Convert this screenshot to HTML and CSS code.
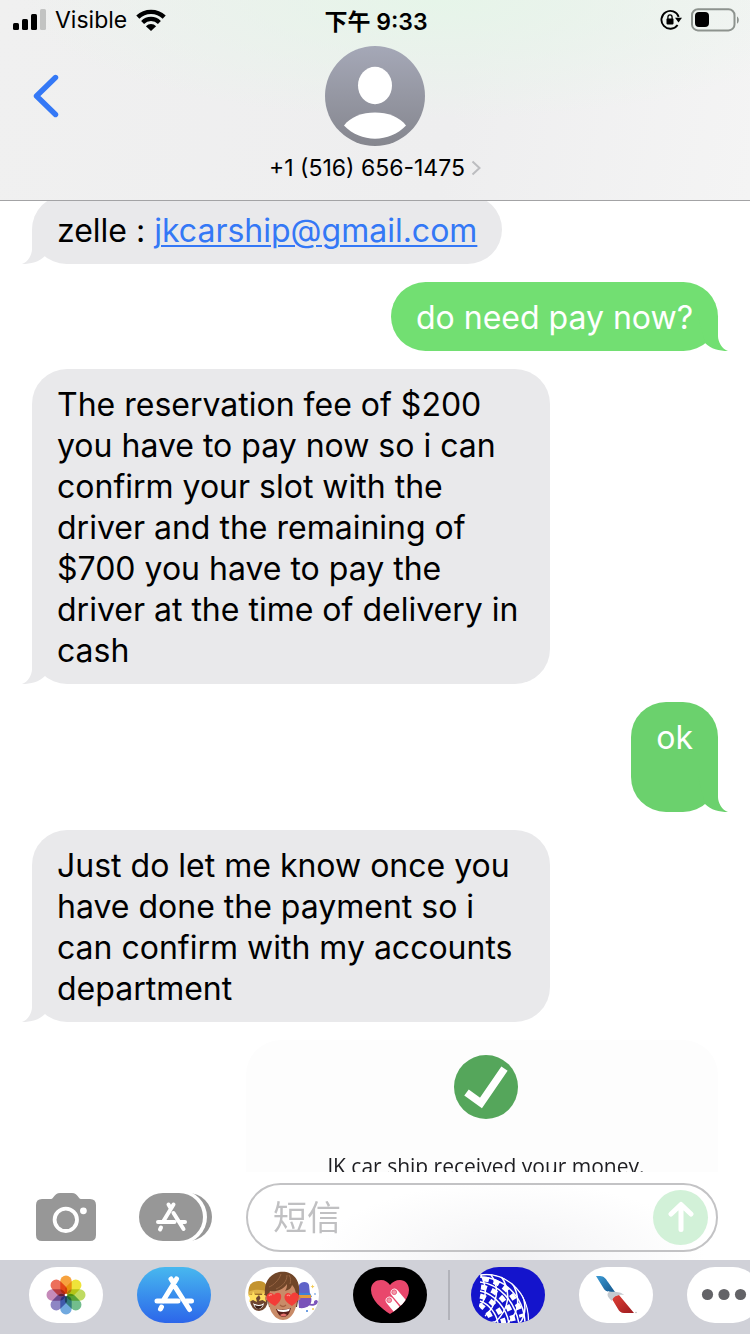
FILE: index.html
```html
<!DOCTYPE html>
<html lang="zh-CN">
<head>
    <meta charset="UTF-8">
    <meta name="viewport" content="width=device-width, initial-scale=1.0">
    <title>+1 (516) 656-1475</title>
    <link rel="stylesheet" href="styles.css">
</head>
<body>
    <header class="header">
        <div class="status-bar">
            <div class="status-left">
                <svg class="signal" width="33" height="22" viewBox="0 0 33 22">
                    <rect x="0" y="14" width="6" height="7" rx="1.5"/>
                    <rect x="9" y="10" width="6" height="11" rx="1.5"/>
                    <rect x="18" y="5" width="6" height="16" rx="1.5"/>
                    <rect x="27" y="0" width="6" height="21" rx="1.5" fill="#c2c3c2"/>
                </svg>
                <span>Visible</span>
                <svg class="wifi" width="30" height="22" viewBox="0 0 30 22">
                    <path d="M1.8 8.2A19 19 0 0 1 28.2 8.2" fill="none" stroke="#000" stroke-width="4.4"/>
                    <path d="M6.6 13.4A12 12 0 0 1 23.4 13.4" fill="none" stroke="#000" stroke-width="4.2"/>
                    <path d="M9.9 17.2A7.2 7.2 0 0 1 20.1 17.2L15 22Z"/>
                </svg>
            </div>
            <time class="clock">下午 9:33</time>
            <div class="status-right">
                <svg width="22" height="22" viewBox="0 0 22 22">
                    <path d="M17.600 16A8.900 8.900 0 1 1 18.700 7.800" fill="none" stroke="#000" stroke-width="1.9"/>
                    <path d="M15 8.800H22L18.500 13.400Z"/>
                    <rect x="6.500" y="9.600" width="7" height="5.800" rx="0.8"/>
                    <path d="M7.900 10V8.200a2.100 2.300 0 0 1 4.200 0V10" fill="none" stroke="#000" stroke-width="1.3"/>
                </svg>
                <svg width="48" height="24" viewBox="0 0 48 24">
                    <rect x="1" y="1.2" width="42.500" height="21.200" rx="6" fill="none" stroke="#8d938e" stroke-width="2"/>
                    <rect x="4" y="4" width="14" height="15" rx="4"/>
                    <path d="M46 8.500c2.400 1.200 2.400 6 0 7.200z" fill="#8d938e"/>
                </svg>
            </div>
        </div>
        <div class="nav">
            <button class="back" type="button" aria-label="返回">
                <svg width="28" height="44" viewBox="0 0 28 44">
                    <path d="M23.500 3.500L4.500 22L23.500 40.500" fill="none" stroke="#3478f6" stroke-width="5.400" stroke-linecap="round" stroke-linejoin="round"/>
                </svg>
            </button>
            <button class="contact" type="button">
                <svg class="avatar" width="100" height="100" viewBox="0 0 100 100">
                    <defs>
                        <linearGradient id="avatar-bg" x1="0" y1="0" x2="0" y2="1">
                            <stop offset="0" stop-color="#a5a8b7"/>
                            <stop offset="1" stop-color="#85868e"/>
                        </linearGradient>
                    </defs>
                    <circle cx="50" cy="50" r="50" fill="url(#avatar-bg)"/>
                    <ellipse cx="50" cy="39.500" rx="17" ry="18.700" fill="#fff"/>
                    <path d="M19 79.500C31 62 69 62 81 79.500C65 97 35 97 19 79.500Z" fill="#fff"/>
                </svg>
                <span class="contact-name">+1 (516) 656-1475
                    <svg width="10" height="16" viewBox="0 0 10 16">
                        <path d="M1.500 1.500L8.500 8L1.500 14.500" fill="none" stroke="#bcbdc0" stroke-width="2"/>
                    </svg>
                </span>
            </button>
        </div>
    </header>

    <main class="thread">
        <div class="bubble received">zelle : <a href="mailto:jkcarship@gmail.com">jkcarship@gmail.com</a></div>
        <div class="bubble sent">do need pay now?</div>
        <div class="bubble received">The reservation fee of $200 you have to pay now so i can confirm your slot with the driver and the remaining of $700 you have to pay the driver at the time of delivery in cash</div>
        <div class="bubble sent darker">ok<br><br></div>
        <div class="bubble received">Just do let me know once you have done the payment so i can confirm with my accounts department</div>
        <div class="receipt">
            <svg width="64" height="64" viewBox="0 0 64 64">
                <circle cx="32" cy="32" r="32" fill="#55a65b"/>
                <path d="M12.500 37.500L27 48L50.500 13.700" fill="none" stroke="#fff" stroke-width="7.600"/>
            </svg>
            <p>JK car ship received your money.</p>
        </div>
    </main>

    <form class="composer">
        <button type="button" aria-label="相机">
            <svg width="60" height="48" viewBox="0 0 60 48">
                <path d="M6 6H15C18 6 18 0 24 0H36C42 0 42 6 45 6H54Q60 6 60 12V42Q60 48 54 48H6Q0 48 0 42V12Q0 6 6 6Z" fill="#979797"/>
                <circle cx="29.800" cy="26.800" r="11.200" fill="none" stroke="#fff" stroke-width="3.800"/>
                <circle cx="47.400" cy="17.800" r="3.400" fill="#fff"/>
            </svg>
        </button>
        <button type="button" aria-label="App Store">
            <svg width="73" height="48" viewBox="0 0 73 48">
                <rect x="8" y="0" width="65" height="48" rx="24" fill="#979797"/>
                <rect x="3" y="-3" width="65" height="54" rx="27" fill="#fff"/>
                <rect x="0" y="0" width="64" height="48" rx="24" fill="#979797"/>
                <g fill="none" stroke="#fff" stroke-width="4" stroke-linecap="round">
                    <path d="M34.500 11.500L24.500 28M29.500 11.500L31.500 15M34.500 20L44.500 36M19 29H35.500M41.500 29H46M22 34.500L21 36.500"/>
                </g>
            </svg>
        </button>
        <div class="message-box">
            <input type="text" placeholder="短信" aria-label="短信">
            <button class="send" type="submit" aria-label="发送">
                <svg width="26" height="32" viewBox="0 0 26 32">
                    <path d="M13 28.500V4M3 13L13 3.500L23 13" fill="none" stroke="#fff" stroke-width="5" stroke-linecap="round" stroke-linejoin="round"/>
                </svg>
            </button>
        </div>
    </form>

    <nav class="app-strip">
        <div class="apps">
            <button class="app" type="button" aria-label="照片">
                <svg width="74" height="56" viewBox="0 0 74 56">
                    <g class="petals" transform="translate(37 28)">
                        <rect x="-5.700" y="-19.500" width="11.400" height="19" rx="5.700" fill="#f7a23e"/>
                        <rect x="-5.700" y="-19.500" width="11.400" height="19" rx="5.700" fill="#efe43a" transform="rotate(45)"/>
                        <rect x="-5.700" y="-19.500" width="11.400" height="19" rx="5.700" fill="#bfdb62" transform="rotate(90)"/>
                        <rect x="-5.700" y="-19.500" width="11.400" height="19" rx="5.700" fill="#72bd8d" transform="rotate(135)"/>
                        <rect x="-5.700" y="-19.500" width="11.400" height="19" rx="5.700" fill="#71a9df" transform="rotate(180)"/>
                        <rect x="-5.700" y="-19.500" width="11.400" height="19" rx="5.700" fill="#8e86c4" transform="rotate(225)"/>
                        <rect x="-5.700" y="-19.500" width="11.400" height="19" rx="5.700" fill="#c58ab9" transform="rotate(270)"/>
                        <rect x="-5.700" y="-19.500" width="11.400" height="19" rx="5.700" fill="#ec6f5b" transform="rotate(315)"/>
                    </g>
                    <circle cx="37" cy="28" r="1.300" fill="#fff"/>
                </svg>
            </button>
            <button class="app store" type="button" aria-label="App Store">
                <svg width="74" height="56" viewBox="0 0 74 56">
                    <g fill="none" stroke="#fff" stroke-width="5" stroke-linecap="round">
                        <path d="M39.500 12L26 34M34 12L36.500 16M38.500 20.500L52.500 42.500M20 34H41M49.500 34H54.500M24.500 40L23.500 42"/>
                    </g>
                </svg>
            </button>
            <button class="app" type="button" aria-label="拟我表情">
                <svg width="74" height="56" viewBox="0 0 74 56">
                    <ellipse cx="14" cy="33" rx="9" ry="11" fill="#6d4430"/>
                    <path d="M3.500 26C3 17 8 14 14 14C20 14 23 18 23 27L4 28Z" fill="#c3932f"/>
                    <path d="M3.500 25C9 22 17 22 23 25V28C17 25.500 9 25.500 3.500 28Z" fill="#e0b54b"/>
                    <path d="M8 24L10 28L14 28L11 31L12 35L8 33L4 35L5 31L3 28L7 28Z" fill="#ffdf5e"/>
                    <path d="M18 25L19.500 28L23 29L20.500 31L21 35L17.500 33L14 34L15.500 31L14 28L17 28Z" fill="#ffdf5e"/>
                    <path d="M8 36Q14 40 19 36Q18 42 13 42Q9 41 8 36Z" fill="#fff"/>
                    <path d="M9.500 38Q14 40 18 38Q16 42 13 42Q10 41 9.500 38Z" fill="#3c1f18"/>
                    <path d="M54 18C56 14 63 14 64 18L65 27H54Z" fill="#5f63c8"/>
                    <path d="M53 26H65L67 30H53Z" fill="#3f7fd8"/>
                    <path d="M53 30H66C68 37 63 42 54 41Z" fill="#7a52b9"/>
                    <path d="M54 28H66V31H54Z" fill="#e39a3b"/>
                    <path d="M61 36C66 39 71 38 72 35C72 33 69 34 70 36" fill="none" stroke="#7a52b9" stroke-width="1.800"/>
                    <path d="M67 19l.6-1.400.6 1.400 1.400.6-1.400.6-.6 1.400-.6-1.400-1.400-.6z" fill="#f3c94d"/>
                    <circle cx="62" cy="44" r="1" fill="#3f7fd8"/>
                    <circle cx="68" cy="42" r="1" fill="#f3c94d"/>
                    <circle cx="70" cy="27" r="0.800" fill="#3f7fd8"/>
                    <path d="M21 24C21 11 28 8 38 8C49 8 55 14 54 28L52 40H24Z" fill="#5f3c26"/>
                    <path d="M23 25C23 18 30 15 38 15C46 15 52 18 52 27C53 42 47 53 38 53C29 53 22 42 23 25Z" fill="#c98b68"/>
                    <circle cx="22.500" cy="31" r="2.500" fill="#c08260"/>
                    <circle cx="53" cy="31" r="2.500" fill="#c08260"/>
                    <path d="M20 28C19 16 23 8 34 5C46 3 56 11 54 27L51 29C51 23 49 20 47 18C46 22 43 23 40 24C42 21 42 19 42 17C38 23 31 25 25 24L23 30Z" fill="#704629"/>
                    <path d="M24 20C29 18 34 13 36 7M31 22C38 19 42 14 42 8M45 17C46 14 46 11 44 8" fill="none" stroke="#966442" stroke-width="1"/>
                    <path d="M30 39C24 36 20 32 22 28C24 25 28 26 29 28C31 25 35 25 36 28C37 32 34 36 30 39Z" fill="#f33d38"/>
                    <path d="M47 39C42 36 38 32 40 28C42 25 45 26 46 28C48 24 53 25 54 29C54 33 51 36 47 39Z" fill="#f33d38"/>
                    <path d="M24 29Q25 27 27 28M42 29Q43 27 45 29" fill="none" stroke="#ff938a" stroke-width="1.200"/>
                    <path d="M35 38Q38 41 41 38" fill="none" stroke="#a36142" stroke-width="1.200"/>
                    <path d="M31 42Q38 44 46 41Q44 50 38 50Q33 49 31 42Z" fill="#5c211c"/>
                    <path d="M32 42Q38 44 45 41.500L44 44Q38 46 33 44Z" fill="#fff"/>
                    <path d="M35 48Q39 45 42 48Q38 51 35 48Z" fill="#e5726d"/>
                </svg>
            </button>
            <button class="app touch" type="button" aria-label="Digital Touch">
                <svg width="74" height="56" viewBox="0 0 74 56">
                    <clipPath id="heart">
                        <path d="M37 47C29 42 18 33 18 23C18 16 23 13 28 13C32 13 35 15 37 18C39 15 43 13 47 13C52 13 56 17 56 23C56 33 45 42 37 47Z"/>
                    </clipPath>
                    <g clip-path="url(#heart)">
                        <rect width="74" height="56" fill="#e9476c"/>
                        <g stroke="#fff" stroke-linecap="round" stroke-width="7.600">
                            <path d="M36.500 33.500L50 50M41.500 25.500L58 45"/>
                        </g>
                        <g fill="#f29aaa" stroke="#e9476c" stroke-width="0.800">
                            <circle cx="36.200" cy="33.200" r="2.400"/>
                            <circle cx="41.200" cy="25.200" r="2.400"/>
                        </g>
                    </g>
                </svg>
            </button>
        </div>
        <div class="divider"></div>
        <div class="apps">
            <button class="app united" type="button" aria-label="United Airlines">
                <svg width="74" height="56" viewBox="0 0 74 56">
                    <clipPath id="globe">
                        <path d="M9 7C34 3 60 25 58 56H18L8 39Z"/>
                    </clipPath>
                    <g clip-path="url(#globe)" fill="none" stroke="#fff">
                        <g stroke-width="1.500">
                            <path d="M9 8C34 4 59 25 57.500 56M9 10C31 10 53 28 54 56M9 15C28 17 44 34 48 57M9 24C24 27 36 42 38 57M9 34C18 37 26 47 27 57"/>
                            <path d="M8 40C16 32 16 20 10 8M13 50C27 38 29 20 20 8M22 57C40 42 40 24 30 9M36 57C50 44 49 28 40 14M48 57C56 48 55 36 50 24"/>
                        </g>
                        <g stroke-width="5" stroke-dasharray="6 5">
                            <path d="M12 12C29 13 45 27 51 50"/>
                            <path d="M10 20C26 22 39 36 43 57"/>
                            <path d="M9 29C21 32 30 43 33 57"/>
                            <path d="M8 38C15 41 20 48 22 58"/>
                        </g>
                    </g>
                </svg>
            </button>
            <button class="app" type="button" aria-label="American Airlines">
                <svg width="74" height="56" viewBox="0 0 74 56">
                    <defs>
                        <linearGradient id="wing" x1="0" y1="0" x2="1" y2="1">
                            <stop offset="0" stop-color="#3c9bd5"/>
                            <stop offset="1" stop-color="#15578d"/>
                        </linearGradient>
                        <linearGradient id="tail" x1="0" y1="0" x2="1" y2="1">
                            <stop offset="0" stop-color="#e24036"/>
                            <stop offset="1" stop-color="#9d1c20"/>
                        </linearGradient>
                    </defs>
                    <path d="M17 9H21C25 9 27 12 29 15L36 25C31 25 27 25 25 22Z" fill="url(#wing)"/>
                    <path d="M33 32C34 29 37 28 40 28L55 46H45C42 46 40 44 39 42Z" fill="url(#tail)"/>
                    <path d="M33 34C29 31 27 27 30 25C35 24 43 25 45 28C40 27 34 29 33 34Z" fill="#c4cad0"/>
                    <circle cx="57" cy="45.500" r="0.700" fill="#aaa"/>
                </svg>
            </button>
            <button class="app" type="button" aria-label="更多">
                <svg width="74" height="56" viewBox="0 0 74 56" fill="#636367">
                    <circle cx="20.500" cy="27.500" r="5.600"/>
                    <circle cx="37" cy="27.500" r="5.600"/>
                    <circle cx="53.500" cy="27.500" r="5.600"/>
                </svg>
            </button>
        </div>
    </nav>
</body>
</html>
```
FILE: styles.css
```css
* {
    box-sizing: border-box;
}

:root {
    --received: #e9e9eb;
    --sent: #72df72;
    --sent-dark: #6bd16d;
    --blue: #3478f6;
}

body {
    margin: 0;
    height: 100vh;
    display: flex;
    flex-direction: column;
    overflow: hidden;
    background-color: #fff;
    color: #000;
    font-family: Inter, "Noto Sans CJK SC", sans-serif;
}

button {
    padding: 0;
    border: none;
    background: none;
    color: inherit;
    font: inherit;
    cursor: pointer;
}

svg {
    display: block;
    flex-shrink: 0;
}

/* Header */
.header {
    position: relative;
    z-index: 1;
    flex-shrink: 0;
    height: 201px;
    border-bottom: 1px solid #a3a3a5;
    background: radial-gradient(ellipse 55% 60% at 58% 0, #e6f5e9, rgba(240, 245, 240, 0)), linear-gradient(100deg, #f0f0f0, #eeeeef 60%, #f4f4f4);
}

.status-bar {
    display: grid;
    grid-template-columns: 1fr auto 1fr;
    align-items: center;
    height: 40px;
    padding: 0 11px 0 13px;
    font-size: 23px;
}

.status-left,
.status-right {
    display: flex;
    align-items: center;
    gap: 9px;
}

.status-right {
    justify-content: flex-end;
}

.clock {
    font-weight: 600;
}

.nav {
    display: grid;
    grid-template-columns: 1fr auto 1fr;
    align-items: start;
    padding: 6px 32px 0;
}

.back {
    justify-self: start;
    margin-top: 28px;
}

.contact {
    display: flex;
    flex-direction: column;
    align-items: center;
    gap: 8px;
}

.contact-name {
    display: flex;
    align-items: center;
    gap: 6px;
    font-size: 23px;
    line-height: 28px;
}

/* Messages */
.thread {
    flex: 1;
    min-height: 0;
    overflow: hidden;
    display: flex;
    flex-direction: column;
    gap: 18px;
    margin-top: -6px;
    padding: 0 32px;
}

.bubble {
    position: relative;
    flex-shrink: 0;
    max-width: 518px;
    padding: 15px 25px 13px;
    border-radius: 35px;
    font-size: 32px;
    line-height: 41px;
}

.bubble::before {
    content: "";
    position: absolute;
    bottom: 0;
    width: 30px;
    height: 35px;
    background-color: inherit;
    clip-path: path("M10 0L10 20C10 26 6 33 0 35C9 35 17 33 23 27L30 0Z");
}

.received {
    align-self: flex-start;
    background-color: var(--received);
}

.received::before {
    left: -10px;
}

.sent {
    align-self: flex-end;
    background-color: var(--sent);
    color: #fff;
}

.sent::before {
    right: -10px;
    transform: scaleX(-1);
}

.darker {
    background-color: var(--sent-dark);
}

.bubble a {
    color: var(--blue);
    text-decoration-thickness: 2px;
    text-underline-offset: 3px;
}

.receipt {
    align-self: flex-end;
    flex-shrink: 0;
    display: flex;
    flex-direction: column;
    align-items: center;
    gap: 32px;
    width: 472px;
    padding: 15px 0 40px 8px;
    border-radius: 35px;
    background-color: #fdfdfd;
    color: #1e1e22;
    font-family: "Open Sans", sans-serif;
    font-size: 21px;
    line-height: 30px;
}

.receipt p {
    margin: 0;
}

/* Composer */
.composer {
    flex-shrink: 0;
    display: flex;
    align-items: center;
    height: 88px;
    padding: 2px 32px 0 36px;
    background: radial-gradient(ellipse 26% 90% at 68% 100%, #f2f2f4, #fff);
}

.composer > button + button {
    margin-left: 43px;
}

.message-box {
    flex: 1;
    min-width: 0;
    display: flex;
    align-items: center;
    height: 69px;
    margin-left: 34px;
    padding: 0 8px 0 25px;
    border: 2px solid #c3c3c5;
    border-radius: 35px;
}

.message-box input {
    flex: 1;
    min-width: 0;
    padding: 0;
    border: none;
    outline: none;
    background: none;
    font-family: Inter, "Noto Sans CJK SC", sans-serif;
    font-size: 34px;
}

.message-box input::placeholder {
    color: #c0c0c2;
}

.send {
    flex-shrink: 0;
    display: flex;
    align-items: center;
    justify-content: center;
    width: 55px;
    height: 55px;
    border-radius: 50%;
    background-color: #d2f1d8;
}

/* App strip */
.app-strip {
    flex-shrink: 0;
    display: flex;
    height: 74px;
    padding: 7px 0 0 29px;
    overflow: hidden;
    background-color: #d0d1d8;
}

.apps {
    display: flex;
    flex-shrink: 0;
    gap: 34px;
}

.app {
    flex-shrink: 0;
    width: 74px;
    height: 56px;
    border-radius: 28px;
    overflow: hidden;
    background-color: #fff;
}

.store {
    background: linear-gradient(#47b8ef, #2c66ea);
}

.touch {
    background-color: #000;
}

.united {
    background-color: #1414cc;
}

.petals rect {
    mix-blend-mode: multiply;
}

.divider {
    flex-shrink: 0;
    width: 2px;
    height: 50px;
    margin: 3px 21px 0;
    background-color: #b2b3ba;
}
```
